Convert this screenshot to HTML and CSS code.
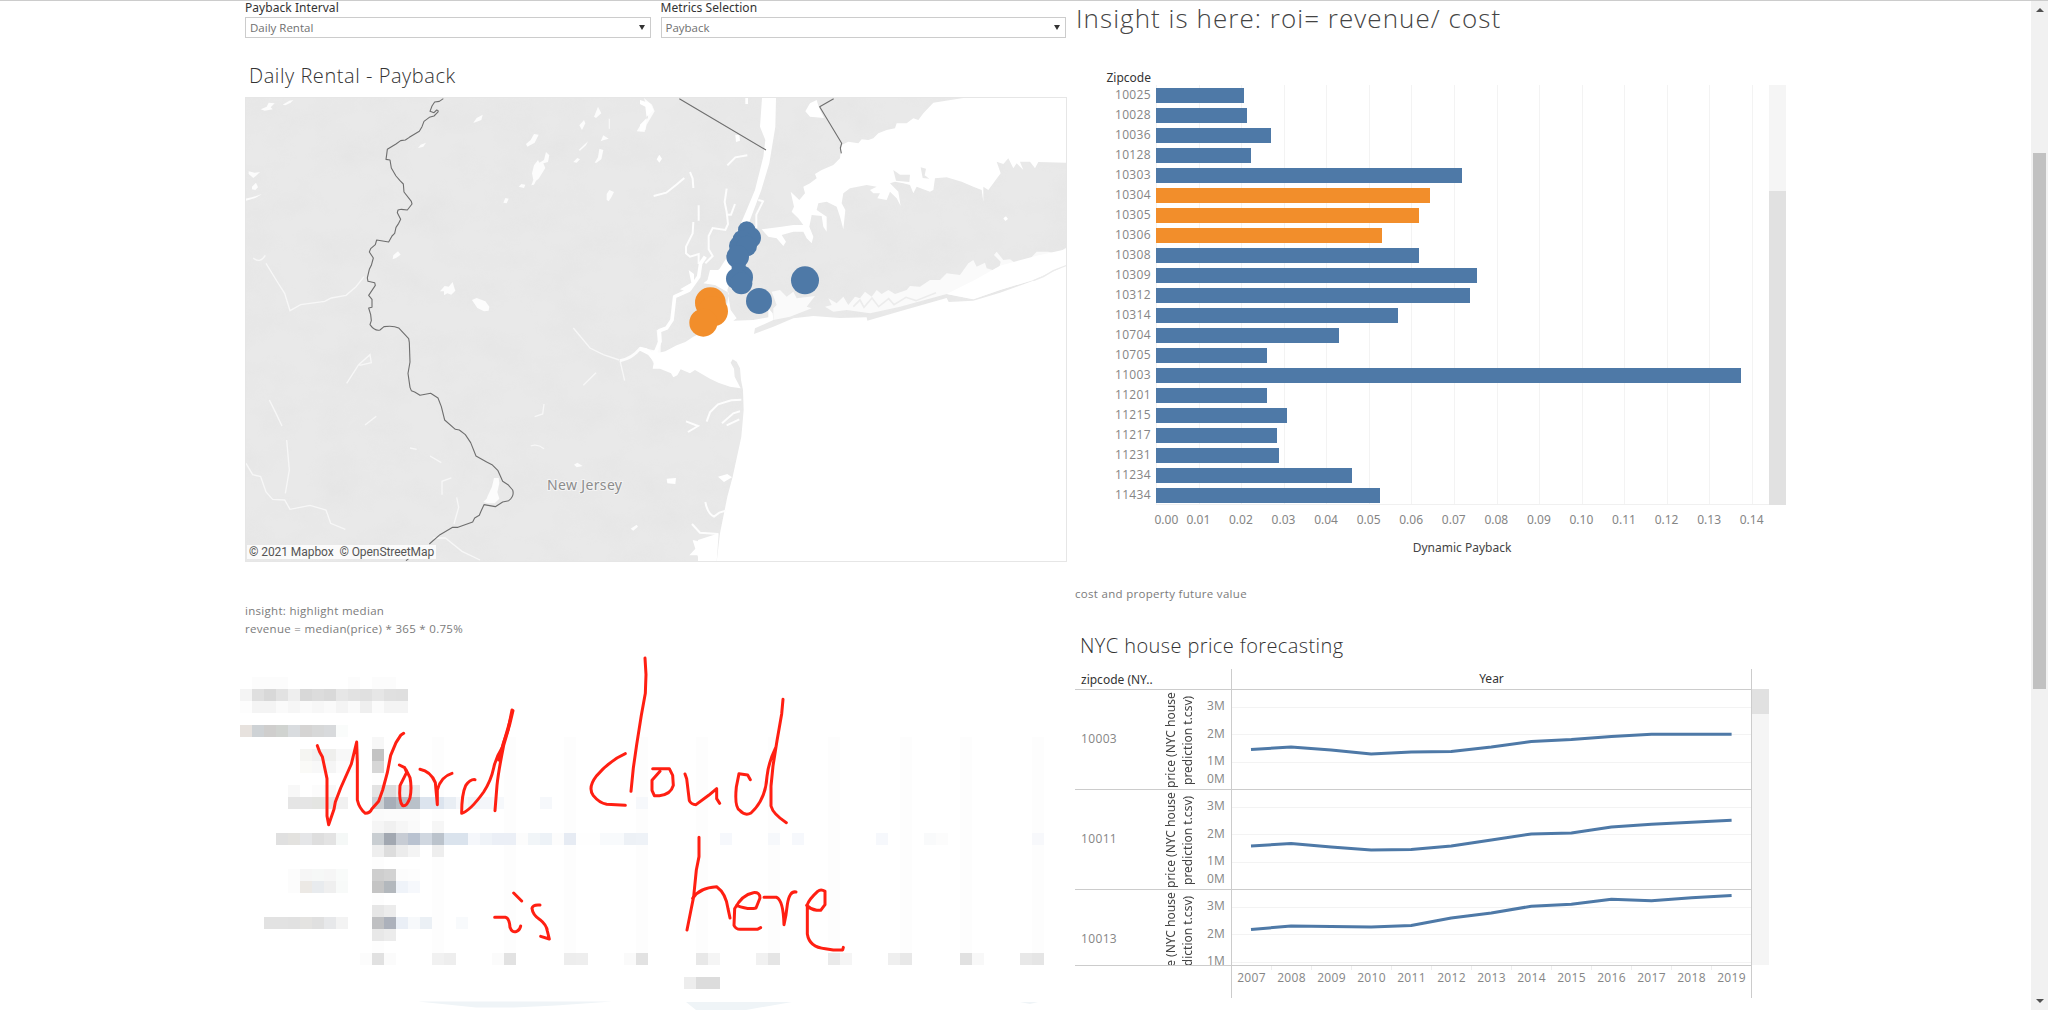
FILE: index.html
```html
<!DOCTYPE html>
<html lang="en">
<head>
<meta charset="utf-8">
<title>Payback dashboard</title>
<link rel="stylesheet" href="styles.css">
</head>
<body>
<div class="page">
  <main class="dashboard">
    <section class="left">
      <div class="filters">
        <div class="filter"><div class="filter-label">Payback Interval</div><div class="select"><span>Daily Rental</span><i class="caret"></i></div></div>
        <div class="filter"><div class="filter-label">Metrics Selection</div><div class="select"><span>Payback</span><i class="caret"></i></div></div>
      </div>
      <h2 class="title map-title">Daily Rental - Payback</h2>
      <div class="map">
        <svg class="map-svg" viewBox="246 98 820 463">
          <defs>
            <filter id="relief" x="0" y="0" width="100%" height="100%">
              <feTurbulence type="fractalNoise" baseFrequency=".022 .03" numOctaves="4" seed="8"/>
              <feColorMatrix values="0 0 0 0 .6  0 0 0 0 .6  0 0 0 0 .6  .5 0 0 0 -.2"/>
            </filter>
          </defs>
          <rect x="245" y="97" width="822" height="465" fill="#e9e9e9"/>
          <rect x="245" y="97" width="822" height="465" filter="url(#relief)" opacity=".4"/>
          <g transform="translate(240 90) scale(.33333)">
            <g fill="#fcfcfc">
              <path d="M62 58l18-8 6-12 18 2-12 12 6 6-24 4zM128 44l20-12 12-2-8 8-16 8zM26 244l18 4 16-2-10 10-10 8-14-12zM36 290l12-12 6 14-8 8-10-2zM16 326l20-4 30-10-20 12-28 8zM700 98l10-14 18-10-4 16-22 8zM534 174l8-10 16-6-8 12zM858 162l14-12 10-18 14 2-12 24-22 12zM874 286l6-16-4-20 6-24 12-16 4 8 14-8 6-24 10 10-4 20-14 4 6 14-20 32-8 6-6 12zM836 290l8-8 12 2-4 10zM790 338l6-14 10 2-6 14zM1100 330l0-18 8-12 14 6-8 16-8 12zM458 508l2-12 14-12 8 10-14 10zM600 604l14-16 12 2 12-14 4 14 4 12-12 12-12-4-10 6 0-12zM696 630l14-6 26 10 12 16-2 12-14 2-20-10zM740 1226l-10 10 14 4 20 0 14-14-6-20 6-26-2-16-14 0-6 26-12 26z"/>
              <path d="M1190 124l12-20 22-20 0-20-12-40 24 20 8 20-24 40-6 22zM1262 834l-18-8-10-20-14-18 22-4 12-20-4-44 12 0zM1062 80l12-30 10 20-16 14zM1018 106l14-16 4 10-10 20zM1016 180l28-26-6 12-18 16zM1064 218l10-16 4-26 12 4-6 28-14 10zM1082 154l8-18 16 10-14 4zM1002 1124l10-6 16 10-18 4zM1172 1316l18-12 4 6-14 12zM1000 216l12-12 8 4-10 10z"/>
            </g>
            <g fill="none" stroke="#f7f7f7" stroke-width="4">
              <path d="M40 504q20 18 36-8M78 520l38 62 18 28 16 52 32-18 72-10 20-10 44-8 30-26 24-30M18 1120l20 34 24 6 16 46 20 22 36 2 16 28 60-12 48 14 14 40 44 18M88 930l20 40 18 38M140 1050l8 90-12 70M320 880l36-56 34-30 4 24-36 8M375 1005l34-26M510 1074l20 4M570 1098l34 20M606 1214l0-40 28-10M650 1222l6 30-14 50M580 1344l36 0 50 40 54 26M1000 714l50 60 40 20 48 16M1140 812l14 60M1030 886l38-38M884 980l24-8 4-30M872 1068q20-8 40 8M1108 86v30"/>
              <path d="M1140 812q36-6 60-36l44 10" stroke="#fcfcfc" stroke-width="9"/>
            </g>
            <path class="state-line" d="M610 26l-12 8-14 2-8 12-6 16 12 4 8-8q8 2 2 8l-10 10-14 4-16 12-6 16-8 14-30 18-12 8-14 2-14 10-26 16-2 16-2 14 12 2 4 24 14 24 12 14 10 10 2 24 22 28 2 8-14 18-18-2-10 2-2 8 10 20-6 12-8 12-4 18-8 8-10 18-36-6-4 14-14 12-4 10 12 18-6 22-6 12-6 26 2 10 20 4 2 8-20 30 10 12 0 24-10 2 6 20 2 18-4 12q14 20 30 16l12-10q28-4 44 4l30 32 2 12 2 58-6 34 6 42 4 10 10 4 16 10 32-6 22 14 10 26 10 40 32 28 12 2 18 14 16 24 16 40 32 18 16 8 18 18 14 32 16 10 14 16q6 18-12 32l-18 4-22 14-34-6-10 22-4 10-14 8-6 12-44 16-16 0-38 22-32 28M506 1406l-8 6"/>
          </g>
          <g transform="translate(640 90) scale(.33333)">
            <path fill="#fff" d="M230 1416L240 1330 262 1220 278 1160 304 1040 311 960 309 900 303 870 300 835 290 815 278 808 272 818 282 836 284 860 302 895 270 890 235 878 210 866 165 840 150 850 122 838 112 856 100 862 93 850 60 836 38 836 42 815 25 795 0 782 0 770 20 775 35 785 46 780 56 788 76 784 110 766 136 756 160 740 200 720 262 640 266 608 225 585 190 580 230 550 262 500 290 430 320 360 345 300 370 200 376 150 360 110 366 24 408 24 406 110 388 220 364 300 330 390 300 480 262 600 272 660 290 685 280 692 340 690 385 682 385 655 398 670 400 690 345 715 342 732 400 710 460 685 520 678 600 684 680 682 682 692 780 664 920 624 926 636 1000 632 1080 608 1180 572 1280 525V1416z"/>
            <path fill="#fff" d="M1280 24L970 24 880 38 850 70 835 90 820 85 800 100 770 100 765 115 740 120 715 130 700 145 685 150 665 148 655 160 625 155 605 165 600 205 580 225 545 240 525 252 530 265 510 280 490 290 495 310 478 330 452 305 462 350 455 365 475 385 490 405 460 405 425 410 365 418 385 440 410 445 430 468 438 455 425 435 460 425 490 425 500 445 515 460 520 440 508 410 515 375 545 378 550 410 560 425 560 380 530 360 535 340 560 335 590 350 600 380 610 418 616 360 605 340 610 310 630 295 680 285 710 290 690 300 700 310 720 310 712 325 740 330 750 305 770 325 782 348 775 305 750 280 765 275 790 280 810 285 820 310 830 290 870 305 880 300 885 265 920 262 965 275 1000 290 1025 300 1030 335 1030 290 1045 300 1060 280 1082 250 1070 215 1090 222 1105 205 1120 235 1130 220 1150 240 1140 215 1170 215 1185 235 1195 216 1280 218z"/>
            <path fill="#e8e8e8" d="M760 240l20 14 30 0-2 22-40-4zM842 232l16 4-4 20 14 10-20-2z"/>
            <path fill="#fafafa" d="M400 655L410 645 395 605 420 600 440 620 460 605 470 625 525 618 500 650 515 655 450 680 400 690zM555 650L575 645 565 625 590 640 610 620 625 645 645 620 660 625 675 605 695 620 710 600 725 612 745 600 765 612 800 600 810 588 840 590 870 570 900 570 920 550 960 555 985 520 1000 510 1010 530 1035 518 1040 535 1075 545 1082 515 1062 495 1070 485 1090 510 1110 508 1125 518 1165 512 1190 485 1225 485 1250 492 1280 472 1280 525 1180 570 1080 600 1000 628 920 612 780 650 690 670 620 660 580 665z"/>
            <path fill="#fff" d="M920 612l80-40 80-45 110-30 90-20v48l-100 45-100 30-80 28z"/>
            <path fill="none" stroke="#ececec" stroke-width="5" d="M640 650l20-20 12 22 24-28 20 26 30-24 16 18 36-22 30 10 60-24"/>
            <path fill="none" stroke="#ebebeb" stroke-width="4" d="M1180 572l30-12 30-18 40-16"/>
            <path fill="none" stroke="#fdfdfd" stroke-width="6" d="M176 346v46M160 396l-2 34-20 40 0 20 12 10 26-8 0 30M260 296l-6 40 6 30 4 36-8 18-38-6-12 24 0 40 12 20-22 22M285 342l-12 32-14 0M355 330l14 4-20 40 0 40M160 294l-2-28-8-20M133 264l-24 20-30 24-38 10M262 226l24-24 36-6M200 995l10-28 24-24 40-12 30-2M144 1026l30-18-36-14M246 1000l34-30 20-6M260 1006l38-18M196 1236q6 34 26 44l16-12 20-6M156 1302l24 26 54 4M160 1354l70 12"/>
            <path fill="none" stroke="#fff" stroke-width="11" stroke-linejoin="round" d="M196 500l-14 20-6 40-28 40-44 20-8 70-16 24-22 8 2 32-14 34"/>
            <path fill="#fff" d="M146 540l16 12 0 30-20 24-22-8 34-20zM510 80l-14-16 14-24 20-10 6 20 16 34zM200 580l10-40 24 0 30-20 0 70zM148 1396l18-20-8-26 36 14 40-10-4 62-50 0-8-20zM234 1160l28-8 14 10-24 14zM80 1166l28-2-2 18-24-2zM50 208l8-14 8 12-8 12zM286 134l12 2 2 16-12 4zM1090 385l8-6 6 8-8 6zM0 30l30 10 10 20-20 20-4 40-16 4 0-20 20-20-4-34-16-8zM316 24h8v18h-8zM174 1380l0-30 62-20-6 86-56 0z"/>
            <path class="state-line" d="M118 26l260 154M581 26l-42 24 66 110-4 14 3 16"/>
            <g fill="#4e79a7"><circle cx="320" cy="420" r="26"/><circle cx="331" cy="443" r="32"/><circle cx="306" cy="448" r="28"/><circle cx="298" cy="468" r="31"/><circle cx="320" cy="468" r="31"/><circle cx="293" cy="500" r="34"/><circle cx="303" cy="562" r="36"/><circle cx="290" cy="566" r="32"/><circle cx="304" cy="580" r="33"/><circle cx="495" cy="571" r="42"/><circle cx="357" cy="633" r="39"/></g>
            <path fill="#4e79a7" d="M275 520h42v20h-42z"/>
            <g fill="#f28e2b"><circle cx="211" cy="638" r="46"/><circle cx="219" cy="664" r="45"/><circle cx="190" cy="698" r="42"/></g>
          </g>
          <text class="map-place" x="547" y="490" textLength="75">New Jersey</text>
        </svg>
        <div class="attribution">© 2021 Mapbox&nbsp; © OpenStreetMap</div>
      </div>
      <p class="note">insight: highlight median<br>revenue = median(price) * 365 * 0.75%</p>
      <svg class="sketch" viewBox="240 650 822 360">
        <g id="mosaic" shape-rendering="crispEdges"></g>
        <path fill="#eff4f7" d="M418 1001.500h194l-56 4-42 2h-38zM686 1002h106l-46 8h-50zM1020 1002h18l-8 2z"/>
        <g transform="translate(230 590) scale(.33333)" class="ink">
          <path d="M262 467l7 19 8 14 14 66 0 112 5 26 16-46 4-22 16-42 32-72 16-66 2 60 0 114q6 26 24 40 14 0 20-14l20-22 12-34 14-52 10-52 16-38 14-22 9-6"/>
          <path d="M508 525l16 8 6 14-20 40q-4 48 8 60 12 4 22-24 6-30 0-60l-12-24M570 538q32 6 46 40l6 66 0-44q10-40 44-50"/>
          <path d="M735 569q-14-2-28 18-12 26-12 83 26-8 66-64 22-34 30-72 6-30 26-62l32-110-10 42-18 62q-16 80-20 120l-6 76" />
          <path d="M846 360l-12 60-14 40-14 50M1245 204l3 50-2 56-12 66-14 88-10 70-7 70M1186 491q-46 20-86 66-28 36-10 60 18 22 40 26l56 3M851 909l24 24M794 982h32q12 2 14 30 6 18 20 12 10-4 12-16M930 945q-22-2-24 10 2 20 24 34 20 16 22 34l6 24-26-8"/>
        </g>
        <g transform="translate(640 640) scale(.33333)" class="ink">
          <path d="M38 386h50l10 20 2 30q-8 28-42 31l-15 0-7-16 0-30 24-27M135 402l5 14 8 66q6 12 20 12l38-28 24-20 0 30 9 14M331 419l-8-14-26-4-8 40q-6 60 10 70 16 18 34 8 44-40 48-110 4-40 26-86M429 178l-4 44-14 80-12 76-6 60 0 60q6 24 46 50M177 592v58l-8 40-8 80-10 50-10 50M158 775q20-32 72-35 28 20 34 66l6 28M290 796q34 14 58 8l12-30q0-18-20-16-34 6-56 48l-2 50q6 12 18 12h52l10-5M372 772h38q20 10 22 82l6-30 4-30q6-42 26-38M500 796q12 12 30 15l12 0 13-17v-40q-12-8-22 0-26 24-31 40v88q6 40 54 44l24 4h28l2-8"/>
        </g>
      </svg>
    </section>

    <section class="right">
      <h1 class="headline">Insight is here: roi= revenue/ cost</h1>
      <div class="bar-chart">
        <div class="bar-main">
          <div class="bar-head">Zipcode</div>
          <div class="bar-body"><div class="zip-labels" id="zips"></div><div class="plot" id="plot"></div></div>
          <div class="x-axis" id="xaxis"></div>
          <div class="x-title">Dynamic Payback</div>
        </div>
        <div class="pane-scroll bar-scroll"><div class="pane-thumb"></div></div>
      </div>
      <p class="note cost-note">cost and property future value</p>
      <h2 class="title fc-title">NYC house price forecasting</h2>
      <div class="forecast">
        <div class="fc-table">
          <div class="fc-head"><div class="fc-zip-head">zipcode (NY..</div><div class="fc-year">Year</div></div>
          <div id="fcrows"></div>
          <div class="fc-foot"><div class="fc-foot-pad"></div><div class="years" id="years"></div></div>
        </div>
        <div class="pane-scroll fc-scroll"><div class="pane-thumb"></div></div>
      </div>
    </section>
  </main>
  <div class="scrollbar"><i class="arrow up"></i><div class="thumb"></div><i class="arrow down"></i></div>
</div>
<script src="script.js"></script>
</body>
</html>
```
FILE: styles.css
```css
* { box-sizing: border-box; margin: 0; padding: 0; }
body { background: #fff; overflow: hidden; font-family: "Noto Sans", "Open Sans", sans-serif; font-size: 12px; color: #555; }
.page { display: flex; width: 2048px; height: 1010px; border-top: 1px solid #ccc; overflow: hidden; }
.dashboard { flex: 1; display: flex; gap: 8px; padding-left: 245px; }
.left { width: 822px; }
.right { width: 714px; }

.filters { display: flex; gap: 10px; width: 821px; }
.filter { flex: 1; }
.filter-label { height: 16px; line-height: 14px; color: #333; white-space: nowrap; letter-spacing: .05px; }
.select { display: flex; justify-content: space-between; align-items: center; height: 21px; border: 1px solid #ccc; padding: 0 5px 1px 4px; font-size: 11.5px; color: #707070; font-family: "Open Sans", sans-serif; }
.caret { border: 3px solid transparent; border-top: 5px solid #333; border-bottom: 0; }
.title { font: 300 20px "Open Sans", "Noto Sans", sans-serif; letter-spacing: .55px; color: #333; white-space: nowrap; }
.map-title { margin: 22px 0 0 4px; height: 37px; line-height: 32px; }
.map { position: relative; width: 822px; height: 465px; border: 1px solid #e6e6e6; }
.map-svg { display: block; width: 820px; height: 463px; }
.state-line { fill: none; stroke: #6e6e6e; stroke-width: 3.3; stroke-linejoin: round; }
.map-place { font: 14px "Noto Sans", sans-serif; fill: #8c8c8c; stroke: #f4f4f4; stroke-width: 2px; paint-order: stroke; }
.attribution { position: absolute; left: 1px; bottom: 2px; height: 14px; padding: 0 2px; background: rgba(255,255,255,.8); font: 12px/14px Roboto, sans-serif; letter-spacing: -.07px; color: #555; }
.note { font: 11.5px/17.500px "Open Sans", sans-serif; letter-spacing: .3px; color: #7b7b7b; margin-top: 40px; white-space: nowrap; }
.sketch { display: block; width: 822px; height: 360px; margin: 13px 0 0 -5px; }
.ink { fill: none; stroke: #ff1f12; stroke-width: 9; stroke-linecap: round; stroke-linejoin: round; }

.headline { font: 300 26px/34px "Open Sans", sans-serif; letter-spacing: 1.050px; color: #444; height: 68px; padding-left: 1px; white-space: nowrap; }
.bar-chart { display: flex; height: 490px; }
.bar-main { width: 694px; }
.bar-head { width: 76px; height: 16px; line-height: 17px; text-align: right; color: #333; }
.bar-body { display: flex; height: 420px; }
.zip-labels { width: 81px; padding-right: 5px; }
.zip-labels div { height: 20px; line-height: 19px; text-align: right; color: #858585; font-family: "Open Sans", sans-serif; letter-spacing: .35px; }
.plot { width: 613px; padding-top: 3px; border-bottom: 1px solid #f0f0f0; background: repeating-linear-gradient(90deg, #f3f3f3 0 1px, transparent 1px 42.570px); }
.bar { height: 15px; margin-bottom: 5px; background: #4e79a7; }
.bar.hot { background: #f28e2b; }
.x-axis { display: flex; margin-left: 59.500px; height: 29px; padding-top: 4px; color: #858585; line-height: 22px; }
.x-axis div { flex: none; width: 42.570px; text-align: center; }
.x-axis div:first-child { text-indent: 20px; }
.x-title { text-align: center; padding-left: 80px; margin-top: 2px; line-height: 24px; color: #444; }
.pane-scroll { width: 17px; background: #f5f5f5; }
.pane-thumb { background: #e1e1e1; }
.bar-scroll { height: 420px; margin-top: 16px; padding-top: 106px; }
.bar-scroll .pane-thumb { height: 314px; }
.cost-note { margin-top: 26px; }
.fc-title { margin: 28px 0 0 5px; height: 38px; line-height: 30px; letter-spacing: .4px; }
.forecast { display: flex; }
.fc-table { width: 677px; }
.fc-head { display: flex; height: 21px; border-bottom: 1px solid #ccc; color: #333; }
.fc-zip-head { width: 157px; border-right: 1px solid #ccc; padding-left: 6px; line-height: 22px; }
.fc-year { flex: 1; text-align: center; line-height: 20px; border-right: 1px solid #ccc; }
.fc-row { display: flex; height: 100px; border-bottom: 1px solid #ccc; overflow: hidden; }
.fc-row.cut { height: 76px; }
.fc-zip { width: 88px; padding-left: 6px; line-height: 98px; color: #858585; font-family: "Open Sans", sans-serif; letter-spacing: .35px; }
.fc-measure { width: 34px; height: 100px; writing-mode: vertical-rl; transform: rotate(180deg); text-align: center; line-height: 16.500px; white-space: nowrap; color: #444; flex: none; }
.fc-ticks { width: 34px; height: 100px; padding: 7.500px 6px 0 0; text-align: right; line-height: 18px; color: #858585; font-family: "Open Sans", sans-serif; letter-spacing: .2px; }
.fc-ticks div { height: 27.600px; }
.fc-ticks div:nth-child(3) { height: 17.500px; }
.fc-plot { display: block; width: 521px; height: 100px; border-left: 1px solid #ccc; border-right: 1px solid #ccc; flex: none; }
.grid { stroke: #f3f3f3; stroke-width: 1; shape-rendering: crispEdges; }
.trend { fill: none; stroke: #4e79a7; stroke-width: 3; stroke-linejoin: round; }
.fc-foot { display: flex; height: 32px; }
.fc-foot-pad { width: 156px; }
.years { display: flex; width: 521px; border-left: 1px solid #ccc; border-right: 1px solid #ccc; color: #858585; font-family: "Open Sans", sans-serif; letter-spacing: .3px; }
.years div { flex: 1; height: 4px; text-align: center; line-height: 24px; border-right: 1px solid #eee; }
.years div:last-child { border: 0; }
.fc-scroll { margin-top: 20px; height: 276px; }
.fc-scroll .pane-thumb { height: 25px; }

.scrollbar { width: 17px; background: #f1f1f1; display: flex; flex-direction: column; align-items: center; }
.thumb { width: 13px; height: 536px; margin-top: 141px; background: #c1c1c1; }
.arrow { border: 4px solid transparent; }
.arrow.up { margin-top: 7px; border-top: 0; border-bottom: 4px solid #505050; }
.arrow.down { margin: auto 0 7px; border-bottom: 0; border-top: 4px solid #505050; }
```
FILE: script.js
```js
const bars = [[10025,88],[10028,91],[10036,115],[10128,94.5],[10303,305.5],[10304,274],[10305,263],[10306,226],[10308,262.5],[10309,320.5],[10312,313.5],[10314,242],[10704,182.5],[10705,110.5],[11003,584.5],[11201,110.5],[11215,131],[11217,120.5],[11231,122.5],[11234,195.5],[11434,224]];
const el = id => document.getElementById(id);
el('zips').innerHTML = bars.map(b => `<div>${b[0]}</div>`).join('');
el('plot').innerHTML = bars.map((b, i) => `<div class="bar${i > 4 && i < 8 ? ' hot' : ''}" style="width:${b[1]}px"></div>`).join('');
el('xaxis').innerHTML = Array.from({ length: 15 }, (_, i) => `<div>${(i / 100).toFixed(2)}</div>`).join('');

const rows = [
  [10003, [59.5,57,60,64,62,61.5,57,51.5,49.5,46.5,44.200,44.200,44.200]],
  [10011, [56,53.500,57,60,59.500,56,50,44,43,37,34.200,32.200,30.200]],
  [10013, [39.500,36,36.500,37,35.500,28,23,16.200,14.200,9.200,10.800,7.800,5.500]]
];
el('fcrows').innerHTML = rows.map(([zip, ys], i) => `<div class="fc-row${i === 2 ? ' cut' : ''}"><div class="fc-zip">${zip}</div><div class="fc-measure">price (NYC house<br>prediction t.csv)</div><div class="fc-ticks"><div>3M</div><div>2M</div><div>1M</div>${i < 2 ? '<div>0M</div>' : ''}</div><svg class="fc-plot" viewBox="0 0 519 100"><path class="grid" d="M0 17.500h520M0 44.500h520M0 72.500h520"/><polyline class="trend" points="${ys.map((y, n) => `${19 + n * 40.050},${y}`).join(' ')}"/></svg></div>`).join('');
el('years').innerHTML = Array.from({ length: 13 }, (_, i) => `<div>${2007 + i}</div>`).join('');

// Pixelated preview: row index, starting column, then one colour per 12px cell.
const cells = [
  [0,1,'fc fc fc'],[0,9,'fc'],[0,11,'fc fc'],
  [1,0,'f4 df d8 e2 ee d8 dc d9 e6 e2 e0 e6 e0 df'],
  [2,0,'fd f4 f4 fa f6 fa f7 fa f4 fa ef fb f4 f4'],
  [4,0,'e7e2de ced2d5 cfcecd d0d3d0 d9dcdf d5d4d3 d7d8d8 d8dadc fafcfb'],
  [5,11,'f7'],[6,5,'f5f5f2 f0 efefed f8 f8'],[6,11,'c3'],[7,5,'fafaf7 f8 f5 fc fc'],[7,11,'d6'],
  [9,4,'f8'],[9,6,'fc f8'],[9,11,'e3 dc ec ea'],
  [10,4,'e5 e5 e4e5e2 e6 f1'],[10,11,'cbcfd3 a7aeb8 b6bdc4 b9c1c9 dce4ee dce4ee e9eef4 f6f8fb f0f3f8 f4f6fa f6f8fb'],[10,25,'f6f8fb'],[10,33,'f6f8fb'],
  [11,11,'fa fb fb fb'],[12,11,'f5 f0 f6 fa'],[12,16,'f6'],
  [13,3,'e0 e3e2df e5e6e8 de e3 f5f8f7'],[13,11,'c9ced2 a2a8b1 c7ccd4 b9c2d0 d0d7e0 bbc3cc dae3ed dae3ed f5f7fb eff3f8 ebeff6 ebeff6 fc f1f5f8 edf2f7 fc e6ebf3 fe fe f8fafc f8fafc edf1f6 eef2f7'],
  [13,40,'f6f8fc'],[13,44,'f6f8fb'],[13,46,'f6f8fc'],[13,53,'f6f8fc'],[13,57,'f9fafb fc'],[13,66,'f7f8fb'],
  [14,11,'ee dd ec f4'],[14,16,'ee'],
  [16,4,'fc f6 f6f8f7 f6 f9fbfa'],[16,11,'ce d2 fc fd'],[17,4,'fc ece9e5 e8ebee ef f8faf9'],[17,11,'c4 b3b8bd eff3f9 f6f8fc'],
  [19,11,'e6 ec'],[20,2,'e2 e2 e1 e4e3e1 e0 e7e8ea f3'],[20,11,'bfc0c2 acb1bb eaeff6 f7f9fb ebf0f5'],[20,18,'f8fafc'],[21,11,'e8 ec'],
  [23,10,'fc e1 fb'],[23,16,'f1 ee'],[23,21,'fb e2'],[23,27,'ed ee'],[23,32,'fa e2'],[23,38,'e8 f5'],[23,43,'f1 e5'],[23,49,'ea f5'],[23,54,'ef e8'],[23,60,'e1 f8'],[23,65,'e8 e5'],
  [25,37,'ed dc dc']
];
const strips = [11,16,22,27,33,38,44,49,55,60,66].map(c => `<rect x="${240 + c * 12}" y="737" width="12" height="216" fill="#fdfdfd"/>`).join('');
el('mosaic').innerHTML = strips + cells.map(([r, c, list]) => list.split(' ').map((v, i) => `<rect x="${240 + (c + i) * 12}" y="${677 + r * 12}" width="12" height="12" fill="#${v.length === 2 ? v.repeat(3) : v}"/>`).join('')).join('');
```
